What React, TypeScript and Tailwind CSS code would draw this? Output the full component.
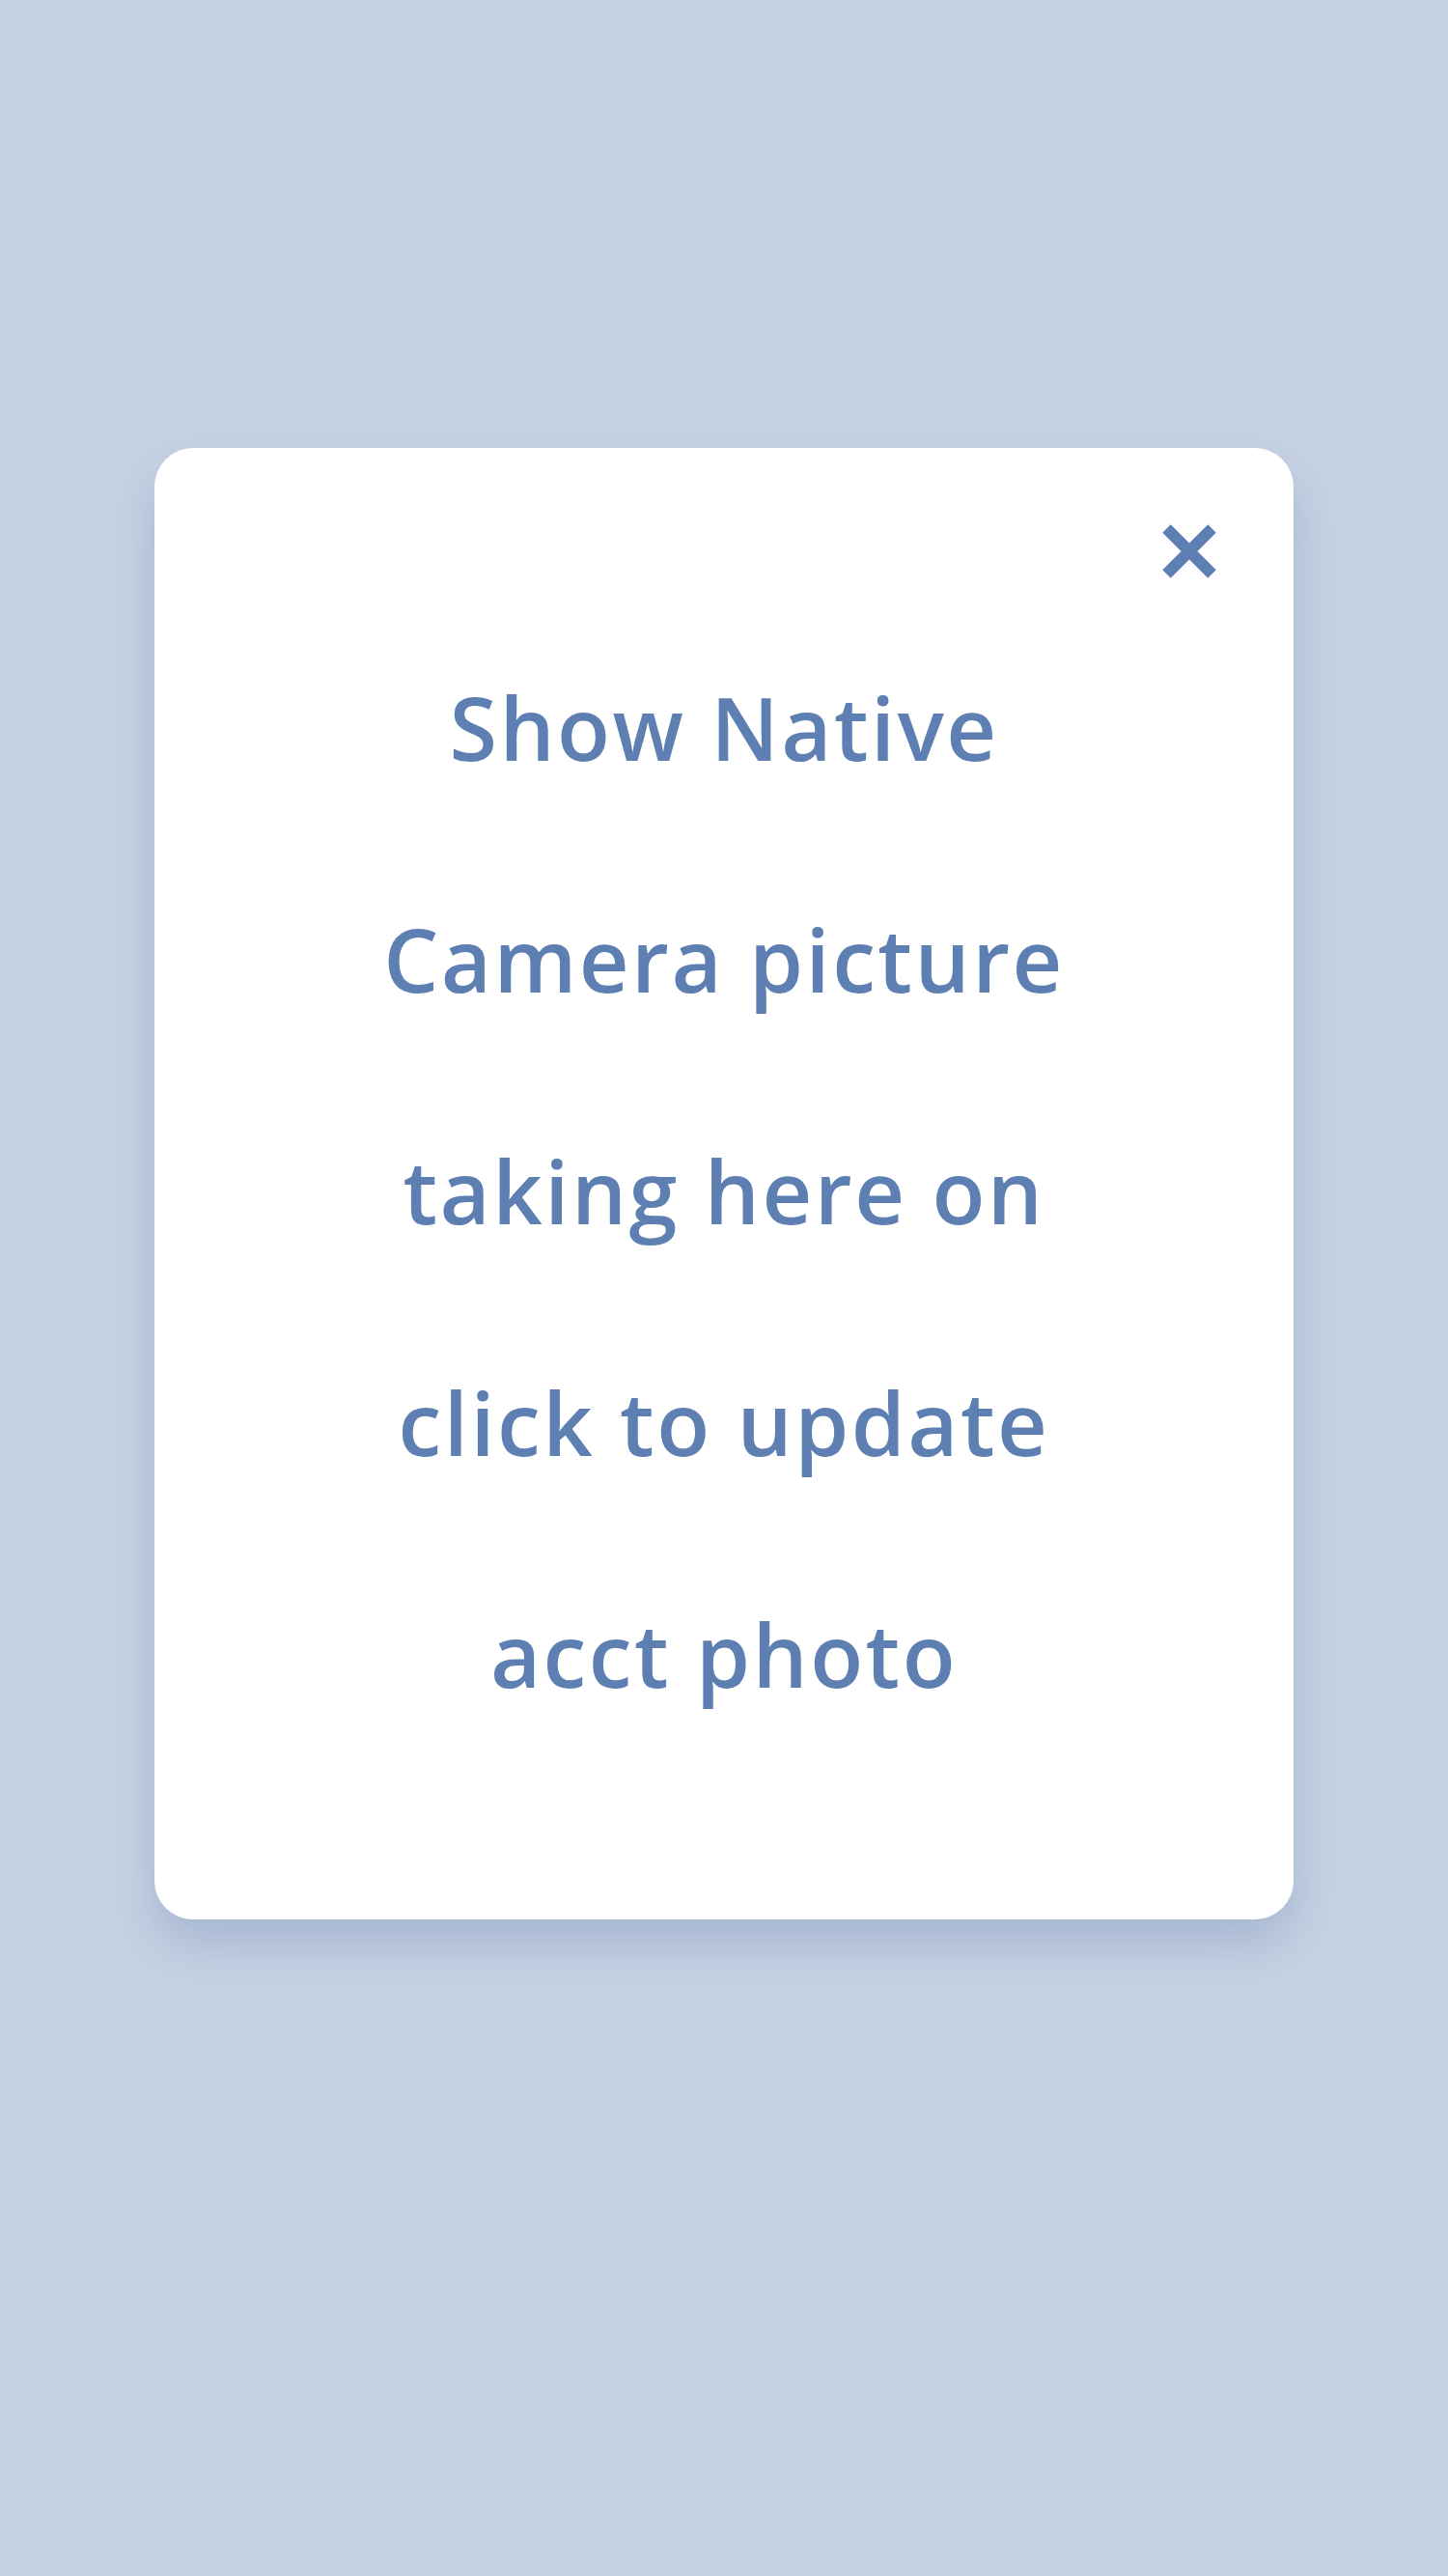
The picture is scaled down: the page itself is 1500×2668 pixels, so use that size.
const lines = ["Show Native", "Camera picture", "taking here on", "click to update", "acct photo"];

const CloseIcon = () => (
  <svg width="56" height="56" viewBox="0 0 56 56" fill="none">
    <path d="M4.5 4.5 L51.5 51.5 M51.5 4.5 L4.5 51.5" stroke="#5d7fb2" strokeWidth={12} strokeLinecap="butt" />
  </svg>
);

export default function App() {
  return (
    <div className="min-h-screen bg-[#c7d2e3] pt-[464px]" style={{ minHeight: 2668 }}>
      <div className="mx-[160px] rounded-[40px] bg-white pt-[79px] px-[80px] pb-[155px] shadow-[0_26px_50px_rgba(80,110,165,0.28)]">
        <div className="flex justify-end">
          <button className="w-14 h-14 flex items-center justify-center" aria-label="Close">
            <CloseIcon />
          </button>
        </div>
        <div className="mt-[34px] flex flex-col items-center font-['Open_Sans',sans-serif] font-semibold text-[90px] leading-[240px] text-[#5d7fb2] tracking-[2.5px]">
          {lines.map((l) => (
            <p key={l} className="whitespace-nowrap">{l}</p>
          ))}
        </div>
      </div>
    </div>
  );
}
